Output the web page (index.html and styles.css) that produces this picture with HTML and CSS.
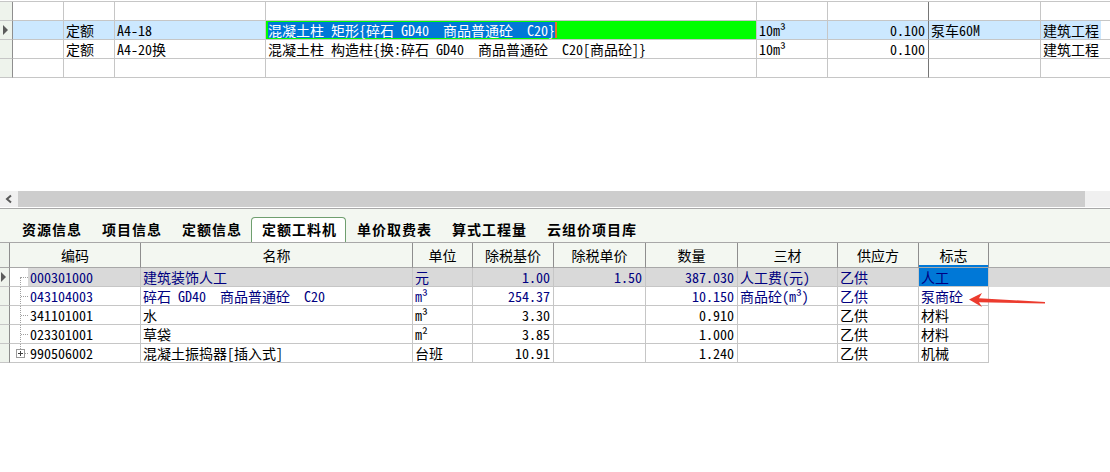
FILE: index.html
```html
<!DOCTYPE html>
<html lang="zh-CN">
<head>
<meta charset="utf-8">
<title>定额工料机</title>
<link rel="stylesheet" href="styles.css">
</head>
<body>
<div class="top-grid">
  <div class="trow">
    <div class="c ind"></div><div class="c"></div><div class="c"></div><div class="c"></div><div class="c"></div><div class="c"></div><div class="c dark"></div><div class="c"></div><div class="c nob"></div><div class="c nob"></div>
  </div>
  <div class="trow sel">
    <div class="c ind"><span class="ptr"></span></div>
    <div class="c"></div>
    <div class="c">定额</div>
    <div class="c">A4-18</div>
    <div class="c edit"><span class="hl">混凝土柱 矩形{碎石 GD40  商品普通砼  C20}</span><span class="caret"></span></div>
    <div class="c">10m³</div>
    <div class="c dark num">0.100</div>
    <div class="c">泵车60M</div>
    <div class="c nob">建筑工程</div>
    <div class="c nob white"></div>
  </div>
  <div class="trow">
    <div class="c ind"></div>
    <div class="c"></div>
    <div class="c">定额</div>
    <div class="c">A4-20换</div>
    <div class="c">混凝土柱 构造柱{换:碎石 GD40  商品普通砼  C20[商品砼]}</div>
    <div class="c">10m³</div>
    <div class="c dark num">0.100</div>
    <div class="c"></div>
    <div class="c nob">建筑工程</div>
    <div class="c nob"></div>
  </div>
  <div class="trow">
    <div class="c ind"></div><div class="c"></div><div class="c"></div><div class="c"></div><div class="c"></div><div class="c"></div><div class="c dark"></div><div class="c"></div><div class="c nob"></div><div class="c nob"></div>
  </div>
</div>

<div class="hscroll">
  <div class="sbtn"><svg width="18" height="16" viewBox="0 0 18 16"><polyline points="11,4.5 7,8 11,11.5" fill="none" stroke="#5a5a5a" stroke-width="2"/></svg></div>
  <div class="sthumb"></div>
  <div class="strack"></div>
</div>

<div class="tabs">
  <div class="tab">资源信息</div>
  <div class="tab">项目信息</div>
  <div class="tab">定额信息</div>
  <div class="tab active">定额工料机</div>
  <div class="tab">单价取费表</div>
  <div class="tab">算式工程量</div>
  <div class="tab">云组价项目库</div>
</div>

<div class="bgrid">
  <div class="brow head">
    <div class="c ind"></div>
    <div class="c">编码</div>
    <div class="c">名称</div>
    <div class="c">单位</div>
    <div class="c">除税基价</div>
    <div class="c">除税单价</div>
    <div class="c">数量</div>
    <div class="c">三材</div>
    <div class="c">供应方</div>
    <div class="c cur">标志</div>
    <div class="c nob"></div>
  </div>
  <div class="brow gray navy">
    <div class="c ind"><span class="ptr"></span></div>
    <div class="c code"><span class="tree first"></span><span class="ctext">000301000</span></div>
    <div class="c">建筑装饰人工</div>
    <div class="c">元</div>
    <div class="c num">1.00</div>
    <div class="c num">1.50</div>
    <div class="c num">387.030</div>
    <div class="c">人工费(元)</div>
    <div class="c">乙供</div>
    <div class="c blue">人工</div>
    <div class="c nob"></div>
  </div>
  <div class="brow navy">
    <div class="c ind"></div>
    <div class="c code"><span class="tree"></span><span class="ctext">043104003</span></div>
    <div class="c">碎石 GD40  商品普通砼  C20</div>
    <div class="c">m³</div>
    <div class="c num">254.37</div>
    <div class="c num"></div>
    <div class="c num">10.150</div>
    <div class="c">商品砼(m³)</div>
    <div class="c">乙供</div>
    <div class="c">泵商砼</div>
    <div class="c nob"></div>
  </div>
  <div class="brow">
    <div class="c ind"></div>
    <div class="c code"><span class="tree"></span><span class="ctext">341101001</span></div>
    <div class="c">水</div>
    <div class="c">m³</div>
    <div class="c num">3.30</div>
    <div class="c num"></div>
    <div class="c num">0.910</div>
    <div class="c"></div>
    <div class="c">乙供</div>
    <div class="c">材料</div>
    <div class="c nob"></div>
  </div>
  <div class="brow">
    <div class="c ind"></div>
    <div class="c code"><span class="tree"></span><span class="ctext">023301001</span></div>
    <div class="c">草袋</div>
    <div class="c">m²</div>
    <div class="c num">3.85</div>
    <div class="c num"></div>
    <div class="c num">1.000</div>
    <div class="c"></div>
    <div class="c">乙供</div>
    <div class="c">材料</div>
    <div class="c nob"></div>
  </div>
  <div class="brow">
    <div class="c ind"></div>
    <div class="c code"><span class="tree last"><span class="plus"></span></span><span class="ctext">990506002</span></div>
    <div class="c">混凝土振捣器[插入式]</div>
    <div class="c">台班</div>
    <div class="c num">10.91</div>
    <div class="c num"></div>
    <div class="c num">1.240</div>
    <div class="c"></div>
    <div class="c">乙供</div>
    <div class="c">机械</div>
    <div class="c nob"></div>
  </div>
</div>

<svg class="red-arrow" width="85" height="20" viewBox="0 0 85 20">
  <path d="M4,9.5 L17,3 L14,8.3 L80,12 L80,13.4 L14,12.3 L17,17 Z" fill="#ec3b2e"/>
</svg>
</body>
</html>
```

FILE: styles.css
```css
* { box-sizing: border-box; }

html, body {
  margin: 0;
  padding: 0;
  background: #ffffff;
  width: 1110px;
  height: 472px;
  overflow: hidden;
}

body {
  position: relative;
  font-family: "Noto Sans Mono CJK SC", "Noto Sans CJK SC", "Liberation Mono", monospace;
  font-size: 14px;
  color: #000000;
}

/* ---------- top grid ---------- */
.top-grid {
  margin-top: 1px;
  border-top: 1px solid #c6c6c6;
  margin-bottom: 113px;
}

.trow {
  display: grid;
  grid-template-columns: 13px 51px 51px 151px 491px 71px 101px 112px 60px 1fr;
  height: 19px;
}

.c {
  height: 100%;
  border-right: 1px solid #c6c6c6;
  border-bottom: 1px solid #c6c6c6;
  padding: 0 2px;
  line-height: 18px;
  white-space: pre;
  overflow: hidden;
}

.c.nob { border-right: none; }
.c.dark { border-right-color: #767676; }
.c.num { text-align: right; padding-right: 3px; }

.c.ind {
  background: #eef3ec;
  border-right-color: #8e8e8e;
  padding: 0;
  display: flex;
  align-items: center;
}

.ptr {
  display: block;
  width: 0;
  height: 0;
  margin-left: 3px;
  border-left: 5px solid #5c5c5c;
  border-top: 5px solid transparent;
  border-bottom: 5px solid transparent;
}

.trow.sel .c { background: #cce8ff; }
.trow.sel .c.ind { background: #eef3ec; }
.trow.sel .c.white { background: #ffffff; }

.trow.sel .c.edit {
  background: #00ff00;
  padding: 1px 0 1px 2px;
  display: flex;
  align-items: stretch;
}

.hl {
  background: #0078d7;
  color: #ffffff;
  line-height: 16px;
}

.caret {
  width: 2px;
  background: #e5702a;
}

/* ---------- horizontal scrollbar ---------- */
.hscroll {
  display: flex;
  height: 16px;
}

.sbtn {
  width: 18px;
  background: #f0f0f0;
  display: flex;
}

.sthumb {
  width: 1067px;
  background: #cdcdcd;
}

.strack {
  flex: 1;
  background: #f0f0f0;
}

/* ---------- tabs ---------- */
.tabs {
  margin-top: 1px;
  border-top: 1px solid #a8a8a8;
  border-bottom: 1px solid #a8a8a8;
  background: #f3f7f1;
  height: 35px;
  display: flex;
  align-items: flex-end;
  padding-left: 11px;
}

.tab {
  height: 25px;
  padding: 0 8px 0 10px;
  border: 1px solid transparent;
  border-bottom: none;
  font-weight: bold;
  letter-spacing: 1px;
  line-height: 23px;
  white-space: nowrap;
}

.tab.active {
  background: #ffffff;
  border-color: #6f9f6f;
  border-radius: 4px 4px 0 0;
}

/* ---------- bottom grid ---------- */
.brow {
  display: grid;
  grid-template-columns: 10px 131px 272px 60px 81px 92px 92px 100px 81px 70px 1fr;
  height: 19px;
}

.brow.head {
  height: 25px;
  background: #f3f7f1;
}

.brow.head .c {
  text-align: center;
  line-height: 24px;
  border-right-color: #8e8e8e;
  border-bottom-color: #a8a8a8;
}

.brow.head .c.nob { border-right: none; }

.brow.head .c.cur {
  box-shadow: inset 0 -2px 0 #0078d7;
}

.brow .c.nob { border-bottom: none; }
.brow.head .c.nob { border-bottom: 1px solid #a8a8a8; }

.brow.navy { color: #000080; }

.brow.gray .c { background: #d9d9d9; }
.brow.gray .c.ind { background: #eef3ec; }
.brow.gray .c.code { background: #ffffff; }
.brow.gray .c.blue { background: #0078d7; }

.c.code {
  padding: 0;
  display: flex;
}

.tree {
  position: relative;
  width: 18px;
  flex: none;
  height: 100%;
}

.tree::before {
  content: "";
  position: absolute;
  left: 10px;
  top: 0;
  bottom: -1px;
  border-left: 1px dotted #a0a0a0;
}

.tree.first::before { top: 9px; }
.tree.last::before { bottom: 9px; }

.tree::after {
  content: "";
  position: absolute;
  left: 11px;
  width: 7px;
  top: 9px;
  border-top: 1px dotted #a0a0a0;
}

.plus {
  position: absolute;
  left: 6px;
  top: 5px;
  width: 9px;
  height: 9px;
  border: 1px solid #9a9a9a;
  background: #ffffff;
  z-index: 1;
}

.plus::before,
.plus::after {
  content: "";
  position: absolute;
  background: #404040;
}

.plus::before { left: 1px; right: 1px; top: 3px; height: 1px; }
.plus::after { top: 1px; bottom: 1px; left: 3px; width: 1px; }

.ctext {
  flex: 1;
  padding-left: 2px;
}

.brow.gray .ctext { background: #d9d9d9; }

.brow .c.ind .ptr { margin-left: 1px; }

/* ---------- annotation ---------- */
.red-arrow {
  position: absolute;
  left: 965px;
  top: 290px;
}
```
